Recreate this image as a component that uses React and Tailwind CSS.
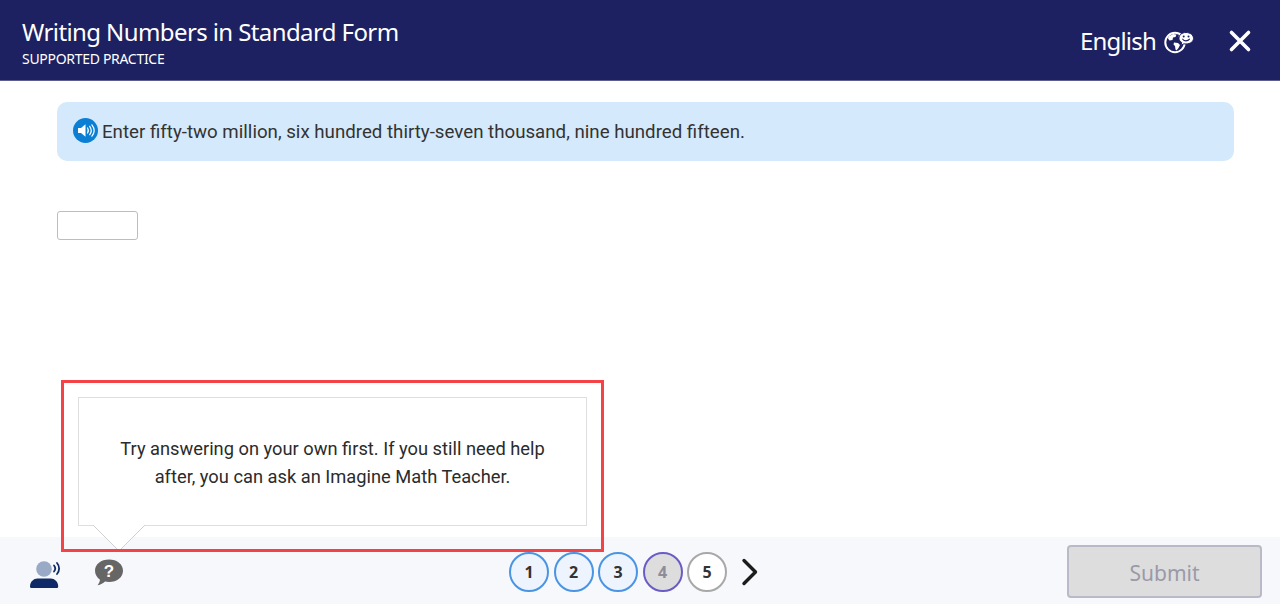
function Globe() {
  return (
    <svg width="32" height="24" viewBox="0 0 32 24" className="ml-[8px]">
      <circle cx="11" cy="12.500" r="9.700" fill="none" stroke="#fff" strokeWidth="2" />
      <path d="M4.500 6.500l4.500-2.500 3.500.5-1 2.500-2.500.5-.5 2.500-3 .5-1.500-2zM10 12.500l4 .5 2 2-1.500 3-2 2.500-1-1-.5-3.500-1.500-1.500zM15 5l2 1-1 1.500-1.500-1z" fill="#fff" />
      <path d="M22 2.500c4.400 0 7.500 2.600 7.500 5.800 0 3.200-3.100 5.700-7.500 5.700-.8 0-1.500-.1-2.200-.2l-2.800 1.700.7-3c-1.700-1-2.700-2.500-2.700-4.200 0-3.200 2.600-5.800 7-5.800z" fill="#fff" stroke="#1e2161" strokeWidth="1" />
      <circle cx="19.700" cy="6.600" r="1" fill="#1e2161" />
      <circle cx="24.500" cy="6.600" r="1" fill="#1e2161" />
      <path d="M18.700 9.200c1.500 2.200 5 2.200 6.800 0" fill="none" stroke="#1e2161" strokeWidth="1.100" strokeLinecap="round" />
    </svg>
  );
}
function Step({ n, cls }) {
  return (
    <div className={`flex h-[40px] w-[40px] items-center justify-center rounded-full border-2 text-[16px] font-bold ${cls}`}>{n}</div>
  );
}
export default function App() {
  return (
    <div className="flex h-[604px] w-[1280px] flex-col overflow-hidden bg-white font-['Roboto',sans-serif]">
      <header className="flex h-[81px] shrink-0 items-center justify-between border-b border-[#5c5e92] bg-[#1e2161] pl-[22px] pr-[28px] pt-[3px] font-['Noto_Sans',sans-serif] text-white">
        <div className="flex flex-col">
          <div className="h-[34px] text-[24px] leading-[34px] tracking-[-0.6px]">Writing Numbers in Standard Form</div>
          <div className="h-[19px] text-[14px] leading-[19px] tracking-[-0.3px]">SUPPORTED PRACTICE</div>
        </div>
        <div className="flex items-center">
          <span className="-mt-[2px] text-[24px] leading-[34px] tracking-[-0.8px]">English</span>
          <Globe />
          <svg width="24" height="24" viewBox="0 0 24 24" className="-mt-[2px] ml-[32px]">
            <path d="M3.500 3.500L20.500 20.500M20.500 3.500L3.500 20.500" stroke="#fff" strokeWidth="3.600" strokeLinecap="round" />
          </svg>
        </div>
      </header>
      <main className="relative min-h-0 flex-1 px-[46px] pt-[21px]">
        <div className="ml-[11px] flex h-[59px] w-[1177px] items-center rounded-[10px] bg-[#d4e9fb] pl-[16px] text-[18.7px] text-[#333333]">
          <svg width="25" height="25" viewBox="0 0 25 25" className="mr-[4px] -mt-[3px] shrink-0">
            <circle cx="12.500" cy="12.500" r="12.500" fill="#0a7fd4" />
            <path d="M5 10h3l4.500-3.800v12.600L8 15H5z" fill="#fff" />
            <path d="M14.500 10c1 1.500 1 3.500 0 5M16.700 8.300c1.900 2.600 1.900 5.800 0 8.400M18.900 6.800c2.700 3.500 2.700 7.900 0 11.400" fill="none" stroke="#fff" strokeWidth="1.200" strokeLinecap="round" />
          </svg>
          <span className="mt-[2px] whitespace-nowrap">Enter fifty-two million, six hundred thirty-seven thousand, nine hundred fifteen.</span>
        </div>
        <div className="ml-[11px] mt-[50px] h-[29px] w-[81px] rounded-[3px] border border-[#bdbdbd] bg-white" />
      </main>
      <footer className="relative flex h-[67px] shrink-0 items-center bg-[#f7f8fb]">
        <svg width="32" height="30" viewBox="0 0 32 30" className="absolute left-[29px] top-[22px]">
          <circle cx="15" cy="10" r="7.800" fill="#9aa9c6" />
          <path d="M1.500 29c-1 0-1.500-.6-1.500-1.500 0-5 4-8 8-8h14c4 0 8 3 8 8 0 .9-.5 1.500-1.500 1.500z" fill="#0f2a66" transform="translate(1 0) scale(.94 1)" />
          <path d="M25 6.500c1.500 1.800 1.500 4.200 0 6M28 4c2.800 3.200 2.800 7.800 0 11" fill="none" stroke="#0f2a66" strokeWidth="1.800" strokeLinecap="round" />
        </svg>
        <svg width="30" height="27" viewBox="0 0 30 27" className="absolute left-[94px] top-[22px]">
          <path d="M15 .5c8 0 14 4.700 14 11.200S23 23 15 23c-1.400 0-2.800-.2-4-.5-1.800 1.800-4.300 3.300-7.500 3.700 1.300-1.500 2.200-3.300 2.500-5.500C3 18.500 1 15.400 1 11.700 1 5.200 7 .5 15 .5z" fill="#666666" />
          <text x="15" y="18" textAnchor="middle" fill="#fff" fontSize="17" fontWeight="900" fontFamily="'Liberation Sans',sans-serif">?</text>
        </svg>
        <div className="absolute left-[509px] top-[15px] flex items-center gap-[4.5px] font-['Noto_Sans',sans-serif] text-[#333333]">
          <Step n="1" cls="border-[#4a94e4] bg-[#edf4fd]" />
          <Step n="2" cls="border-[#4a94e4] bg-[#edf4fd]" />
          <Step n="3" cls="border-[#4a94e4] bg-[#edf4fd]" />
          <Step n="4" cls="border-[#6a5cc4] bg-[#dddddd] text-[#8d8d9a]" />
          <Step n="5" cls="border-[#a8a8a8] bg-white" />
          <svg width="20" height="28" viewBox="0 0 20 28" className="ml-[8px]">
            <path d="M4 2.500L15.500 14 4 25.500" fill="none" stroke="#1c1c1c" strokeWidth="3.400" strokeLinecap="round" strokeLinejoin="round" />
          </svg>
        </div>
        <button className="absolute left-[1067px] top-[8px] h-[53px] w-[195px] rounded-[4px] border-2 border-[#b9b9c8] bg-[#dddddd] pt-[4px] font-['Noto_Sans',sans-serif] text-[21px] text-[#9a9aa8]">Submit</button>
      </footer>
      <div className="absolute left-[78px] top-[397px] flex h-[129px] w-[509px] items-center justify-center border border-[#dedede] bg-white px-[30px] pt-[2px] text-center text-[18.3px] leading-[28px] text-[#2b2b2b]">
        Try answering on your own first. If you still need help after, you can ask an Imagine Math Teacher.
      </div>
      <svg width="54" height="27" viewBox="0 0 54 27" className="absolute left-[92px] top-[525px]">
        <path d="M1 0L27 26L53 0" fill="#ffffff" stroke="#d0d0d0" strokeWidth="1" />
      </svg>
      <div className="absolute left-[61px] top-[380px] h-[172px] w-[543px] border-[3px] border-[#f34346]" />
    </div>
  );
}
